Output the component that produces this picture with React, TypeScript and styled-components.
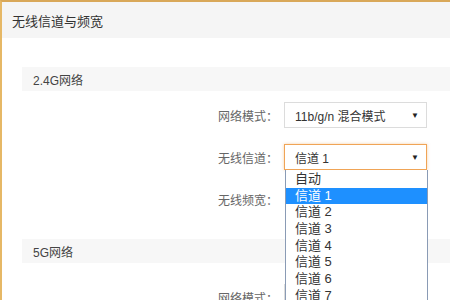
import styled, { createGlobalStyle } from 'styled-components';

const GlobalStyle = createGlobalStyle`
  html, body {
    margin: 0;
    padding: 0;
    background: #ffffff;
    overflow: hidden;
  }
  body {
    font-family: "Liberation Sans", "Noto Sans CJK SC", sans-serif;
    color: #333;
  }
`;

const Panel = styled.div`
  width: 450px;
  height: 300px;
  box-sizing: border-box;
  border-top: 2px solid #d9a859;
  border-left: 2px solid #e6b866;
  overflow: hidden;
  position: relative;
`;

const Header = styled.div`
  height: 36px;
  background: #f5f5f5;
  display: flex;
  align-items: center;
  padding-left: 10px;
  font-size: 13px;
  color: #333;
`;

const Body = styled.div`
  padding: 29px 0 0 20px;
  display: flex;
  flex-direction: column;
`;

const SectionBar = styled.div<{ $top?: number }>`
  height: 24px;
  background: #f7f7f7;
  display: flex;
  align-items: center;
  padding-left: 11px;
  font-size: 12px;
  color: #444;
  margin-top: ${(p) => p.$top ?? 0}px;
`;

const Rows = styled.div<{ $top?: number }>`
  display: flex;
  flex-direction: column;
  gap: 16px;
  padding-top: ${(p) => p.$top ?? 11}px;
`;

const Row = styled.div`
  display: flex;
  align-items: center;
  height: 26px;
  position: relative;
`;

const Label = styled.div`
  width: 262px;
  text-align: right;
  font-size: 12px;
  color: #666;
  padding-right: 6px;
  box-sizing: border-box;
`;

const Select = styled.div<{ $active?: boolean }>`
  width: 143px;
  height: 26px;
  box-sizing: border-box;
  border: 1px solid ${(p) => (p.$active ? '#f0a456' : '#dcdcdc')};
  box-shadow: ${(p) => (p.$active ? '0 0 3px rgba(240,164,86,0.5)' : 'none')};
  display: flex;
  align-items: center;
  justify-content: space-between;
  padding: 0 7px 0 10px;
  font-size: 12px;
  color: #333;
  background: #fff;
  position: relative;
`;

const Arrow = styled.span`
  font-size: 8px;
  color: #222;
`;

const DropList = styled.div`
  position: absolute;
  left: 0;
  top: 25px;
  width: 143px;
  box-sizing: border-box;
  border: 1px solid #8a9bb5;
  border-top: none;
  background: #fff;
  z-index: 5;
  padding-top: 1px;
`;

const Option = styled.div<{ $selected?: boolean }>`
  height: 16.7px;
  line-height: 16.7px;
  padding-left: 9px;
  font-size: 13px;
  color: ${(p) => (p.$selected ? '#fff' : '#333')};
  background: ${(p) => (p.$selected ? '#1e90ff' : 'transparent')};
`;

const options = ['自动', '信道 1', '信道 2', '信道 3', '信道 4', '信道 5', '信道 6', '信道 7', '信道 8'];

export default function App() {
  return (
    <>
      <GlobalStyle />
      <Panel>
        <Header>无线信道与频宽</Header>
        <Body>
          <SectionBar>2.4G网络</SectionBar>
          <Rows>
            <Row>
              <Label>网络模式：</Label>
              <Select>
                <span>11b/g/n 混合模式</span>
                <Arrow>▼</Arrow>
              </Select>
            </Row>
            <Row>
              <Label>无线信道：</Label>
              <Select $active>
                <span>信道 1</span>
                <Arrow>▼</Arrow>
                <DropList>
                  {options.map((o) => (
                    <Option key={o} $selected={o === '信道 1'}>
                      {o}
                    </Option>
                  ))}
                </DropList>
              </Select>
            </Row>
            <Row>
              <Label>无线频宽：</Label>
            </Row>
          </Rows>
          <SectionBar $top={27}>5G网络</SectionBar>
          <Rows $top={21}>
            <Row>
              <Label>网络模式：</Label>
              <Select />
            </Row>
          </Rows>
        </Body>
      </Panel>
    </>
  );
}
